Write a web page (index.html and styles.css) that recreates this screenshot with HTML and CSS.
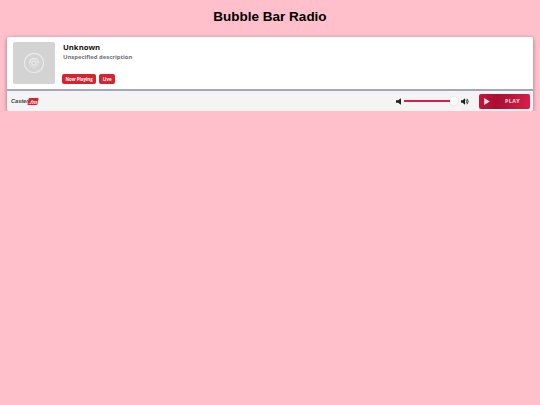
FILE: index.html
```html
<!DOCTYPE html>
<html lang="en">
<head>
    <meta charset="UTF-8">
    <meta name="viewport" content="width=device-width, initial-scale=1.0">
    <title>Bubble Bar Radio</title>
    <link rel="stylesheet" href="styles.css">
</head>
<body>
    <h1 class="page-title">Bubble Bar Radio</h1>

    <div class="player">
        <div class="player-info">
            <div class="cover">
                <svg class="cover-icon" viewBox="0 0 22 22" width="22" height="22" fill="none" stroke="#ececec" stroke-width="1.1">
                    <circle cx="11" cy="11" r="9.6"/>
                    <circle cx="11" cy="11" r="2.2"/>
                    <path d="M6.6 11A4.4 4.4 0 0 1 15.4 11" stroke-width="1.2"/>
                    <path d="M6.6 11A4.4 4.4 0 0 0 15.4 11" stroke-width="0.6"/>
                </svg>
            </div>
            <div class="details">
                <div class="station-name">Unknown</div>
                <div class="station-desc">Unspecified description</div>
                <div class="tags">
                    <span class="tag">Now Playing</span>
                    <span class="tag">Live</span>
                </div>
            </div>
        </div>

        <div class="controls">
            <div class="brand"><span class="brand-name">Caster</span><span class="brand-fm">.fm</span></div>
            <div class="volume">
                <svg class="vol-icon" viewBox="0 0 6 8" width="5" height="7">
                    <path d="M0 2.5h2.5L6 0v8L2.5 5.5H0z" fill="#222"/>
                </svg>
                <div class="vol-track"><div class="vol-fill"></div><div class="vol-knob"></div></div>
                <svg class="vol-icon" viewBox="0 0 10 8" width="8" height="7">
                    <path d="M0 2.5h2L5 0v8L2 5.5H0z" fill="#222"/>
                    <path d="M6 1.8a3 3 0 0 1 0 4.4M7.5 .6a5 5 0 0 1 0 6.8" fill="none" stroke="#222" stroke-width="1.1"/>
                </svg>
            </div>
            <button class="play-btn">
                <svg viewBox="0 0 8 10" width="6" height="7"><path d="M0 0l8 5-8 5z" fill="#f7e6ea"/></svg>
                <span>PLAY</span>
            </button>
        </div>
    </div>
</body>
</html>
```

FILE: styles.css
```css
body {
    margin: 0;
    background-color: #ffc0cb;
    font-family: "Open Sans", sans-serif;
}

.page-title {
    margin: 0;
    padding-top: 8px;
    height: 29px;
    line-height: 17px;
    font-family: "Liberation Sans", Arial, sans-serif;
    font-size: 13.5px;
    font-weight: bold;
    text-align: center;
    color: #000;
}

.player {
    margin: 0 7px;
    border-radius: 2px;
    overflow: hidden;
    box-shadow: 0 1px 4px rgba(0, 0, 0, 0.4);
}

.player-info {
    display: flex;
    height: 54px;
    box-sizing: border-box;
    padding: 5px 6px;
    background: #fff;
    border-bottom: 2px solid #a4a4c0;
}

.cover {
    width: 42px;
    height: 42px;
    border-radius: 2px;
    background: #d3d3d3;
    display: flex;
    align-items: center;
    justify-content: center;
}

.details {
    margin-left: 8px;
    display: flex;
    flex-direction: column;
}

.station-name {
    font-size: 7.7px;
    font-weight: 700;
    line-height: 11px;
    color: #111;
}

.station-desc {
    font-size: 5.9px;
    font-weight: 700;
    line-height: 8px;
    color: #70707c;
}

.tags {
    display: flex;
    gap: 3px;
    margin-top: auto;
    margin-left: -1px;
}

.tag {
    padding: 0 3.5px;
    height: 10px;
    line-height: 10px;
    font-size: 4.4px;
    font-weight: 700;
    color: #fff;
    background: #d8232f;
    border-radius: 2px;
}

.controls {
    display: flex;
    align-items: center;
    height: 20px;
    padding: 0 3px 0 4px;
    background: #f4f4f4;
}

.brand {
    display: flex;
    align-items: center;
    font-family: "Liberation Sans", Arial, sans-serif;
    font-size: 5.6px;
    font-weight: bold;
    font-style: italic;
}

.brand-name {
    color: #444;
}

.brand-fm {
    padding: 0.5px 1px;
    color: #fff;
    background: #d8232f;
    border-radius: 1px;
    transform: skewX(-12deg);
}

.volume {
    display: flex;
    align-items: center;
    margin-left: auto;
    margin-right: 10px;
}

.vol-icon {
    display: block;
}

.vol-track {
    position: relative;
    width: 54px;
    height: 2px;
    margin: 0 3px;
}

.vol-fill {
    width: 46px;
    height: 100%;
    background: #d81e4a;
}

.vol-knob {
    position: absolute;
    top: -3px;
    left: 46px;
    width: 8px;
    height: 8px;
    border-radius: 50%;
    background: #fff;
    box-shadow: 0 0 2px rgba(0, 0, 0, 0.15);
}

.play-btn {
    display: flex;
    align-items: center;
    width: 51px;
    height: 15px;
    padding: 0 5px;
    border: none;
    border-radius: 2px;
    background: linear-gradient(100deg, #c8143c, #a80f32 35%, #d81e4a);
    font-family: "Open Sans", sans-serif;
    font-size: 5.5px;
    font-weight: 700;
    color: #f2d9df;
}

.play-btn span {
    margin-left: auto;
    margin-right: 5px;
    letter-spacing: 0.3px;
}
```
